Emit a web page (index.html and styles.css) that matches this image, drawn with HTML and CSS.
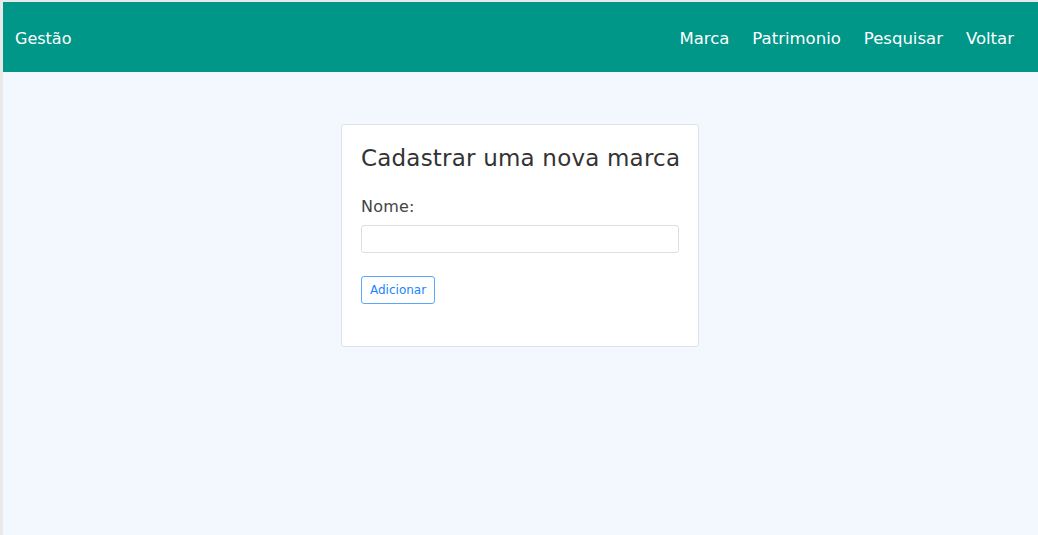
FILE: index.html
```html
<!DOCTYPE html>
<html lang="pt">
<head>
<meta charset="utf-8">
<title>Gestão</title>
<link rel="stylesheet" href="styles.css">
</head>
<body>
<div class="frame">
  <nav class="navbar">
    <a class="brand" href="#">Gestão</a>
    <ul class="nav-links">
      <li><a href="#">Marca</a></li>
      <li><a href="#">Patrimonio</a></li>
      <li><a href="#">Pesquisar</a></li>
      <li><a href="#">Voltar</a></li>
    </ul>
  </nav>
  <main class="content">
    <form class="card">
      <h2 class="card-title">Cadastrar uma nova marca</h2>
      <label class="label" for="nome">Nome:</label>
      <input class="input" id="nome" type="text">
      <button class="btn" type="button">Adicionar</button>
    </form>
  </main>
</div>
</body>
</html>
```
FILE: styles.css
```css
html, body {
  margin: 0;
  padding: 0;
  height: 100%;
}
body {
  background: #e9e9e9;
  font-family: "DejaVu Sans", Verdana, sans-serif;
}
.frame {
  margin: 2px 0 0 3px;
  height: calc(100% - 2px);
  display: flex;
  flex-direction: column;
  background: #f3f7fe;
}
.navbar {
  box-sizing: border-box;
  height: 70px;
  background: #009688;
  display: flex;
  align-items: center;
  justify-content: space-between;
  padding: 2px 24px 0 12px;
  flex-shrink: 0;
}
.navbar a {
  color: #fff;
  text-decoration: none;
  font-size: 16.5px;
}
.navbar .brand {
  font-size: 16px;
}
.nav-links {
  list-style: none;
  margin: 0;
  padding: 0;
  display: flex;
  gap: 23px;
}
.content {
  flex: 1;
  display: flex;
  justify-content: center;
  align-items: flex-start;
  padding-top: 52px;
}
.card {
  width: 318px;
  background: #fff;
  border: 1px solid #dde4ec;
  border-radius: 3px;
  padding: 19px 19px 42px 19px;
  display: flex;
  flex-direction: column;
  align-items: flex-start;
  margin-left: -1px;
}
.card-title {
  margin: 0 0 25px 0;
  font-weight: normal;
  font-size: 23px;
  letter-spacing: 0.2px;
  white-space: nowrap;
  color: #333;
  line-height: 28px;
}
.label {
  font-size: 16px;
  letter-spacing: 0.2px;
  color: #444;
  line-height: 20px;
  margin-bottom: 8px;
}
.input {
  box-sizing: border-box;
  width: 100%;
  height: 28px;
  border: 1px solid #dcdfe4;
  border-radius: 3px;
  margin: 0 0 23px 0;
}
.btn {
  box-sizing: border-box;
  height: 28px;
  padding: 0 8px;
  border: 1px solid #5aa9ff;
  border-radius: 3px;
  background: #fff;
  color: #1a84ff;
  font-family: "DejaVu Sans", Verdana, sans-serif;
  font-size: 12px;
}
```
